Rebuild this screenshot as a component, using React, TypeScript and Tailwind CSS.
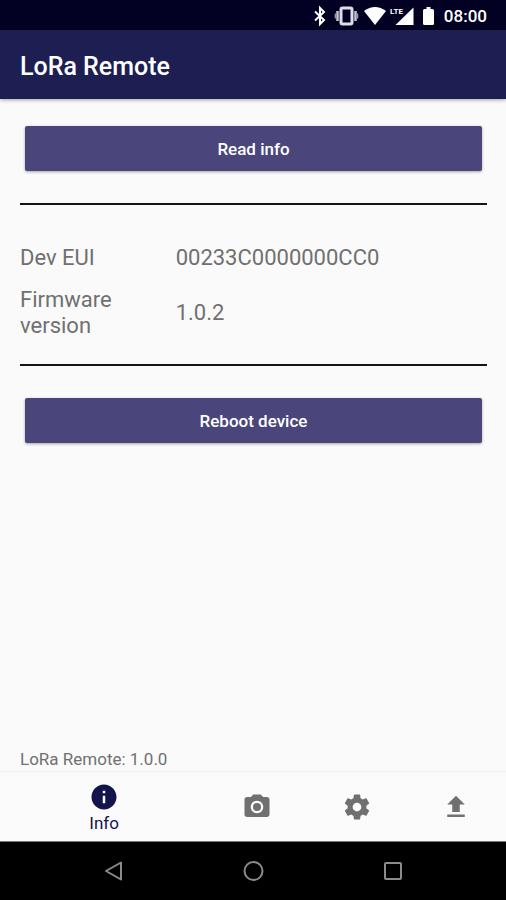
import type { ReactNode } from 'react';

function Icon({ children }: { children: ReactNode }) {
  return (
    <svg viewBox="0 0 24 24" fill="currentColor" aria-hidden="true" className="size-[30px] shrink-0">
      {children}
    </svg>
  );
}

function StatusBar() {
  return (
    <div className="flex h-[30px] items-center justify-end bg-[#020023] pt-px pr-[19px] text-white">
      <svg viewBox="0 0 130 24" fill="currentColor" aria-hidden="true" className="mr-1 h-6 w-[130px]">
        <path d="M5 7.500 L14 16 L10 20 V4 L14 8 L5 16.500" fill="none" stroke="currentColor" strokeWidth="2" />
        <rect x="31" y="4" width="11" height="16" rx="1.500" fill="none" stroke="#dedee6" strokeWidth="3" />
        <path d="M27.500 7v10M45.500 7v10" stroke="#c4c4ce" strokeWidth="2.500" />
        <path d="M25.500 9.500v5M47.500 9.500v5" stroke="#9c9caa" strokeWidth="1.500" />
        <path d="M54 7 Q65 -1 76 7 L65 21 Z" />
        <path d="M103.500 3.500 V21 H85.500 Z" />
        <rect x="80" y="0" width="13" height="11.500" fill="#020023" />
        <text x="80" y="10" className="font-['Roboto',sans-serif] text-[8px] font-bold">LTE</text>
        <path d="M116.500 3h4v2h2q1.500 0 1.500 1.500v13q0 1.500-1.500 1.500h-8q-1.500 0-1.500-1.500V6.500q0-1.500 1.500-1.500h2z" />
      </svg>
      <span className="text-[17px] leading-6 font-medium">08:00</span>
    </div>
  );
}

function ActionButton({ children }: { children: ReactNode }) {
  return (
    <button
      type="button"
      className="mx-[5px] h-[45px] rounded-xs bg-[#4a467c] text-[17px] leading-6 font-medium text-white shadow-[0_1px_3px_rgba(0,0,0,0.35)]"
    >
      {children}
    </button>
  );
}

export default function App() {
  return (
    <div className="flex min-h-screen flex-col bg-[#fafafa] font-['Roboto',sans-serif] text-[#707070]">
      <StatusBar />
      <header className="flex h-[69px] items-center bg-[#1d1f52] px-5 pt-1 shadow-[0_1px_4px_rgba(0,0,0,0.35)]">
        <h1 className="text-[25px] leading-8 font-medium text-white">LoRa Remote</h1>
      </header>

      <main className="flex grow flex-col pt-[27px] pr-[19px] pl-5">
        <ActionButton>Read info</ActionButton>
        <hr className="mt-8 border-t-2 border-[#141414]" />
        <dl className="mt-10 mb-[25px] grid grid-cols-[1fr_2fr] items-center gap-y-4 text-[22px] leading-[26px]">
          <dt>Dev EUI</dt>
          <dd>00233C0000000CC0</dd>
          <dt className="max-w-[120px]">Firmware version</dt>
          <dd>1.0.2</dd>
        </dl>
        <hr className="mb-8 border-t-2 border-[#141414]" />
        <ActionButton>Reboot device</ActionButton>
        <p className="mt-auto text-[17px] leading-6">LoRa Remote: 1.0.0</p>
      </main>

      <nav aria-label="Sections" className="grid h-[70px] grid-cols-[207fr_100fr_100fr_100fr] border-t border-[#efefef] bg-[#fbfbfb] pl-px">
        <button type="button" aria-current="page" className="flex flex-col items-center pt-[10px] text-[#14144d]">
          <Icon>
            <path d="M12 2C6.480 2 2 6.480 2 12s4.480 10 10 10 10-4.480 10-10S17.520 2 12 2zm1 15h-2v-6h2v6zm0-8h-2V7h2v2z" />
          </Icon>
          <span className="-mt-px text-[17px] leading-6">Info</span>
        </button>
        <button type="button" aria-label="Camera" className="flex items-center justify-center">
          <Icon>
            <circle cx="12" cy="12" r="3.200" />
            <path d="M9 2L7.170 4H4c-1.100 0-2 .9-2 2v12c0 1.100.9 2 2 2h16c1.100 0 2-.9 2-2V6c0-1.100-.9-2-2-2h-3.170L15 2H9zm3 15c-2.760 0-5-2.240-5-5s2.240-5 5-5 5 2.240 5 5-2.240 5-5 5z" />
          </Icon>
        </button>
        <button type="button" aria-label="Settings" className="flex items-center justify-center">
          <Icon>
            <path d="M19.430 12.980c.04-.32.07-.64.07-.98s-.03-.66-.07-.98l2.110-1.650c.19-.15.24-.42.12-.64l-2-3.460c-.12-.22-.39-.3-.61-.22l-2.490 1c-.52-.4-1.080-.73-1.690-.98l-.38-2.650C14.460 2.180 14.250 2 14 2h-4c-.25 0-.46.18-.49.42l-.38 2.650c-.61.25-1.170.59-1.690.98l-2.490-1c-.23-.09-.49 0-.61.22l-2 3.460c-.13.22-.07.49.12.64l2.110 1.650c-.04.32-.07.65-.07.98s.03.66.07.98l-2.110 1.650c-.19.15-.24.42-.12.64l2 3.460c.12.22.39.3.61.22l2.490-1c.52.4 1.080.73 1.690.98l.38 2.650c.03.24.24.42.49.42h4c.25 0 .46-.18.49-.42l.38-2.650c.61-.25 1.170-.59 1.690-.98l2.490 1c.23.09.49 0 .61-.22l2-3.460c.12-.22.07-.49-.12-.64l-2.110-1.650zM12 15.500c-1.930 0-3.500-1.570-3.500-3.500s1.570-3.500 3.500-3.500 3.500 1.570 3.500 3.500-1.570 3.500-3.500 3.500z" />
          </Icon>
        </button>
        <button type="button" aria-label="Upload" className="flex items-center justify-center">
          <Icon>
            <path d="M9 16h6v-6h4l-7-7-7 7h4zm-4 2h14v2H5z" />
          </Icon>
        </button>
      </nav>

      <div className="flex h-[59px] items-center justify-center border-t border-[#777777] bg-black text-[#8b8b8b]">
        <button type="button" aria-label="Back" className="flex w-[140px] justify-center">
          <svg viewBox="0 0 24 24" fill="none" stroke="currentColor" strokeWidth="2" strokeLinejoin="round" className="size-6">
            <path d="M5 12 20 3.500v17z" />
          </svg>
        </button>
        <button type="button" aria-label="Home" className="flex w-[140px] justify-center">
          <svg viewBox="0 0 24 24" fill="none" stroke="currentColor" strokeWidth="2" className="size-6">
            <circle cx="12.500" cy="12" r="9" />
          </svg>
        </button>
        <button type="button" aria-label="Recent apps" className="flex w-[140px] justify-center">
          <svg viewBox="0 0 24 24" fill="none" stroke="currentColor" strokeWidth="2" className="size-6">
            <rect x="4" y="4" width="16" height="16" rx="1" />
          </svg>
        </button>
      </div>
    </div>
  );
}
